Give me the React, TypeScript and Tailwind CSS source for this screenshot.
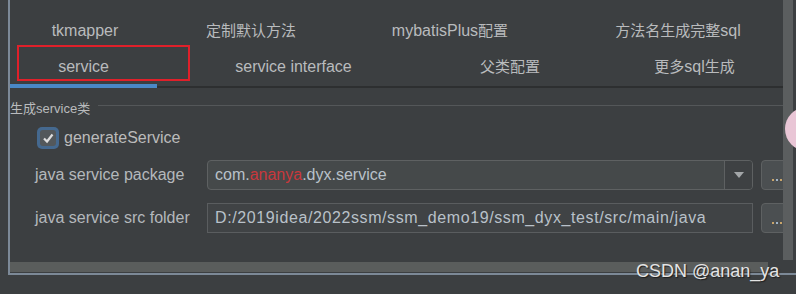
import React from "react";

const font = "font-['Liberation_Sans','Noto_Sans_CJK_SC',sans-serif]";

function Tab({ w, children }: { w: number; children: React.ReactNode }) {
  return (
    <div style={{ width: w }} className="shrink-0 flex items-center justify-center text-[16px] text-[#b9bbbd] whitespace-nowrap">
      <span>{children}</span>
    </div>
  );
}

function C({ children }: { children: React.ReactNode }) {
  return <span className="text-[15px]">{children}</span>;
}

function DotsButton() {
  return (
    <div className="ml-[8px] w-[30px] h-[30px] shrink-0 rounded-[4px] border border-[#5e6162] bg-[#4b4f51] flex items-end justify-center pb-[8px] pl-[2px]">
      <div className="flex gap-[2px]">
        <span className="w-[2px] h-[2px] bg-[#c9a56b]" />
        <span className="w-[2px] h-[2px] bg-[#9fb3c8]" />
        <span className="w-[2px] h-[2px] bg-[#c9a56b]" />
      </div>
    </div>
  );
}

export default function App() {
  return (
    <div className={`${font} relative w-[796px] h-[294px] bg-[#3c3f41] overflow-hidden`}>
      <div className="ml-[8px] w-[788px] h-[275px] border-l-2 border-b-2 border-[#7c8997] flex flex-col">
        <div className="h-[262px] flex">
          <div className="w-[773px] shrink-0 overflow-hidden flex flex-col">
            {/* tab rows */}
            <div className="mt-[12px] h-[37px] flex">
              <Tab w={150}>tkmapper</Tab>
              <Tab w={182}><C>定制默认方法</C></Tab>
              <Tab w={216}>mybatisPlus<C>配置</C></Tab>
              <Tab w={240}><C>方法名生成完整</C>sql</Tab>
            </div>
            <div className="h-[35px] flex">
              <Tab w={147}>service</Tab>
              <Tab w={273}>service interface</Tab>
              <Tab w={160}><C>父类配置</C></Tab>
              <Tab w={209}><C>更多</C>sql<C>生成</C></Tab>
            </div>
            <div className="h-[4px] flex items-end">
              <div className="w-[147px] h-[4px] bg-[#4a88c7]" />
              <div className="flex-1 h-[2px] bg-[#2d2f30]" />
            </div>
            {/* group */}
            <div className="mt-[13px] flex items-center h-[14px]">
              <span className="text-[13px] text-[#b9bbbd] leading-none whitespace-nowrap">生成service类</span>
              <div className="ml-[8px] flex-1 h-px bg-[#545759] -mt-[5px]" />
            </div>
            <div className="mt-[12px] ml-[27px] flex items-center h-[22px]">
              <div className="w-[22px] h-[22px] shrink-0 rounded-[5px] bg-[#45698f] p-[3px]">
                <div className="w-full h-full rounded-[3px] bg-[#53585b] flex items-center justify-center">
                  <svg width="12" height="12" viewBox="0 0 12 12">
                    <path d="M2 6.5 L5 9.5 L10.5 2.5" fill="none" stroke="#dedede" strokeWidth="2.2" />
                  </svg>
                </div>
              </div>
              <span className="ml-[5px] text-[16px] text-[#bbbbbb]">generateService</span>
            </div>
            <div className="mt-[11px] ml-[25px] flex items-center h-[30px]">
              <span className="w-[172px] shrink-0 text-[16px] text-[#b4b8bc] whitespace-nowrap">java service package</span>
              <div className="w-[546px] shrink-0 h-[30px] rounded-[4px] border border-[#5e6162] bg-[#45494a] flex">
                <div className="flex-1 flex items-center pl-[7px] text-[16px] text-[#b9c1c9]">
                  com.<span className="text-[#c9383c]">ananya</span>.dyx.service
                </div>
                <div className="w-[28px] border-l border-[#5e6162] bg-[#3e4143] rounded-r-[3px] flex items-center justify-center">
                  <svg width="10" height="6" viewBox="0 0 10 6">
                    <path d="M0 0 H10 L5 6 Z" fill="#a3a6a8" />
                  </svg>
                </div>
              </div>
              <DotsButton />
            </div>
            <div className="mt-[13px] ml-[25px] flex items-center h-[30px]">
              <span className="w-[172px] shrink-0 text-[16px] text-[#b4b8bc] whitespace-nowrap">java service src folder</span>
              <div className="w-[546px] shrink-0 h-[30px] border border-[#5a5d5f] bg-[#404345] flex items-center pl-[7px] text-[16px] tracking-[0.6px] text-[#b9c1c9] whitespace-nowrap overflow-hidden">
                D:/2019idea/2022ssm/ssm_demo19/ssm_dyx_test/src/main/java
              </div>
              <DotsButton />
            </div>
          </div>
          <div className="w-[10px] h-[260px] bg-[#5b5e5f]" />
        </div>
        <div className="h-[11px] flex">
          <div className="w-[758px] h-[10px] bg-[#5a5d5c]" />
        </div>
      </div>
      {/* annotation box */}
      <div className="absolute left-[17px] top-[45px] w-[173px] h-[36px] border-2 border-[#e0202a]" />
      {/* pink floating circle */}
      <div className="absolute left-[785px] top-[107px] w-[44px] h-[44px] rounded-full bg-[#e9c6d6]" />
      {/* watermark */}
      <div className="absolute left-[636px] top-[260px] text-[18px] leading-[22px] font-['Liberation_Sans',sans-serif] text-[#e4e4e4] [text-shadow:1px_1px_1px_#1e1e1e] whitespace-nowrap">
        CSDN @anan_ya
      </div>
    </div>
  );
}
